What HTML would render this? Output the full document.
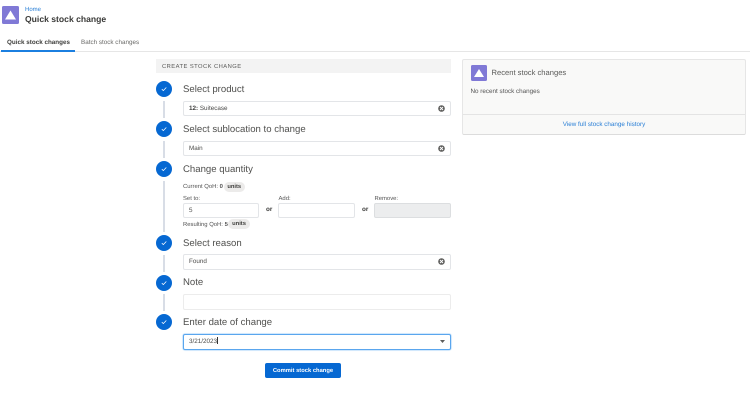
<!DOCTYPE html>
<html><head><meta charset="utf-8"><style>
html,body{margin:0;padding:0;background:#fff}
body{width:750px;height:406px;position:relative;overflow:hidden;font-family:"Liberation Sans",sans-serif;color:#3e3e3c;text-rendering:geometricPrecision}
#w{position:absolute;left:0;top:0;width:750px;height:406px;filter:blur(.3px)}
.a{position:absolute;white-space:nowrap}
.h{position:absolute;left:183px;font-size:9.6px;line-height:14px;color:#4f4f4d;white-space:nowrap;margin-top:1px}
.c{position:absolute;left:156px;width:16px;height:16px;border-radius:50%;background:#0668d2}
.c svg{position:absolute;left:0;top:0}
.l{position:absolute;left:163px;width:2px;background:#d8dde6}
.i{position:absolute;box-sizing:border-box;border:1px solid #e3e5e8;border-radius:2px;background:#fff;font-size:6.3px;line-height:14px;padding-left:5px;color:#4a4a48;white-space:nowrap}
.s{font-size:5.9px;line-height:8px;color:#555}
.p{position:absolute;height:10px;border-radius:5px;background:#ecebea;font-size:5.8px;font-weight:bold;line-height:10px;text-align:center;color:#3e3e3c}
.o{font-size:6.3px;font-weight:bold;color:#3e3e3c}
.x{position:absolute;left:438px;width:7px;height:7px}
</style></head><body><div id="w">
<svg class="a" style="left:2px;top:6px" width="17" height="18" viewBox="0 0 17 18"><rect width="17" height="18" rx="1.5" fill="#8079d6"/><path d="M8.5 4.5L14 13.5H3z" fill="#fff"/></svg>
<div class="a" style="left:25px;top:6px;font-size:6px;line-height:8px;color:#2a7fd6">Home</div>
<div class="a" style="left:25px;top:13px;font-size:8.6px;line-height:12px;font-weight:bold;color:#3a3a38">Quick stock change</div>
<div class="a" style="left:7px;top:38.5px;font-size:6.3px;line-height:8px;font-weight:bold;color:#3e3e3c">Quick stock changes</div>
<div class="a" style="left:81px;top:38.5px;font-size:6.3px;line-height:8px;color:#6b6b69">Batch stock changes</div>
<div class="a" style="left:0;top:51px;width:750px;height:1px;background:#e6e6e6"></div>
<div class="a" style="left:1px;top:50px;width:74px;height:1.5px;background:#1b7fe0"></div>

<div class="a" style="left:156px;top:59px;width:295px;height:14px;background:#f3f3f3;font-size:5.8px;line-height:16px;letter-spacing:.45px;text-indent:6px;color:#5a5a58">CREATE STOCK CHANGE</div>

<div class="c" style="top:81px"><svg width="16" height="16"><path d="M5.8 8.1l1.5 1.5 3-3.1" fill="none" stroke="#fff" stroke-width=".8"/></svg></div>
<div class="l" style="top:101px;height:17px"></div>
<div class="h" style="top:81.5px">Select product</div>
<div class="i" style="left:183px;top:100.5px;width:268px;height:15.5px"><b style="color:#3e3e3c">12:</b> Suitecase</div>
<svg class="x" style="top:104.5px" viewBox="0 0 7 7"><circle cx="3.5" cy="3.5" r="3.3" fill="#5e5e5c"/><path d="M2 2l3 3M5 2L2 5" stroke="#fff" stroke-width=".9"/></svg>

<div class="c" style="top:121px"><svg width="16" height="16"><path d="M5.8 8.1l1.5 1.5 3-3.1" fill="none" stroke="#fff" stroke-width=".8"/></svg></div>
<div class="l" style="top:141px;height:17px"></div>
<div class="h" style="top:121.5px">Select sublocation to change</div>
<div class="i" style="left:183px;top:140.5px;width:268px;height:15.5px">Main</div>
<svg class="x" style="top:144.5px" viewBox="0 0 7 7"><circle cx="3.5" cy="3.5" r="3.3" fill="#5e5e5c"/><path d="M2 2l3 3M5 2L2 5" stroke="#fff" stroke-width=".9"/></svg>

<div class="c" style="top:161px"><svg width="16" height="16"><path d="M5.8 8.1l1.5 1.5 3-3.1" fill="none" stroke="#fff" stroke-width=".8"/></svg></div>
<div class="l" style="top:181px;height:51px"></div>
<div class="h" style="top:161.5px">Change quantity</div>
<div class="a s" style="left:183px;top:182.5px">Current QoH: <b>0</b></div>
<div class="p" style="left:223.5px;top:181.7px;width:21.5px">units</div>
<div class="a s" style="left:183px;top:195px">Set to:</div>
<div class="a s" style="left:278.5px;top:195px">Add:</div>
<div class="a s" style="left:374.5px;top:195px">Remove:</div>
<div class="i" style="left:183px;top:203px;width:76px;height:15px">5</div>
<div class="i" style="left:278px;top:203px;width:77px;height:15px"></div>
<div class="i" style="left:374px;top:203px;width:77px;height:15px;background:#ecedee;border-color:#dcdee0"></div>
<div class="a o" style="left:266px;top:206px;line-height:8px">or</div>
<div class="a o" style="left:362px;top:206px;line-height:8px">or</div>
<div class="a s" style="left:183px;top:220.5px">Resulting QoH: <b>5</b></div>
<div class="p" style="left:228.3px;top:219.3px;width:21.5px">units</div>

<div class="c" style="top:235px"><svg width="16" height="16"><path d="M5.8 8.1l1.5 1.5 3-3.1" fill="none" stroke="#fff" stroke-width=".8"/></svg></div>
<div class="l" style="top:255px;height:17px"></div>
<div class="h" style="top:235.5px">Select reason</div>
<div class="i" style="left:183px;top:254px;width:268px;height:15.5px">Found</div>
<svg class="x" style="top:258px" viewBox="0 0 7 7"><circle cx="3.5" cy="3.5" r="3.3" fill="#5e5e5c"/><path d="M2 2l3 3M5 2L2 5" stroke="#fff" stroke-width=".9"/></svg>

<div class="c" style="top:274.5px"><svg width="16" height="16"><path d="M5.8 8.1l1.5 1.5 3-3.1" fill="none" stroke="#fff" stroke-width=".8"/></svg></div>
<div class="l" style="top:294px;height:17px"></div>
<div class="h" style="top:275px">Note</div>
<div class="i" style="left:183px;top:294px;width:268px;height:15.5px;border-color:#ececec"></div>

<div class="c" style="top:314.3px"><svg width="16" height="16"><path d="M5.8 8.1l1.5 1.5 3-3.1" fill="none" stroke="#fff" stroke-width=".8"/></svg></div>
<div class="h" style="top:315px">Enter date of change</div>
<div class="i" style="left:183px;top:334px;width:268px;height:15.5px;border-color:#5aa6ee;box-shadow:0 0 1px 0.5px #a6d2f8">3/21/2023<span style="display:inline-block;width:.5px;height:7px;background:#333;vertical-align:-1px"></span></div>
<svg class="a" style="left:439.5px;top:340px" width="5" height="3"><path d="M0 0H5L2.5 3z" fill="#5e5e5c"/></svg>

<div class="a" style="left:265px;top:362.7px;width:76px;height:15.3px;border-radius:2px;background:#0668d2;color:#fff;font-size:5.8px;font-weight:bold;line-height:16.5px;text-align:center">Commit stock change</div>

<div class="a" style="left:462.3px;top:59.3px;width:283.5px;height:76px;box-sizing:border-box;border:1px solid #e6e6e6;border-bottom:1.5px solid #dcdcdc;border-radius:2px;background:#f9f9f8"></div>
<svg class="a" style="left:470.5px;top:65px" width="16" height="16" viewBox="0 0 16 16"><rect width="16" height="16" rx="1.5" fill="#8079d6"/><path d="M8 4L13 12H3z" fill="#fff"/></svg>
<div class="a" style="left:491.5px;top:67px;font-size:7.6px;line-height:11px;color:#5a5a58">Recent stock changes</div>
<div class="a" style="left:470.5px;top:88px;font-size:6.3px;line-height:8px;color:#555">No recent stock changes</div>
<div class="a" style="left:463px;top:113.5px;width:282px;height:1px;background:#e4e4e4"></div>
<div class="a" style="left:463px;top:120.5px;width:282px;text-align:center;font-size:6.3px;line-height:8px;color:#2a7fd6">View full stock change history</div>
</div></body></html>
